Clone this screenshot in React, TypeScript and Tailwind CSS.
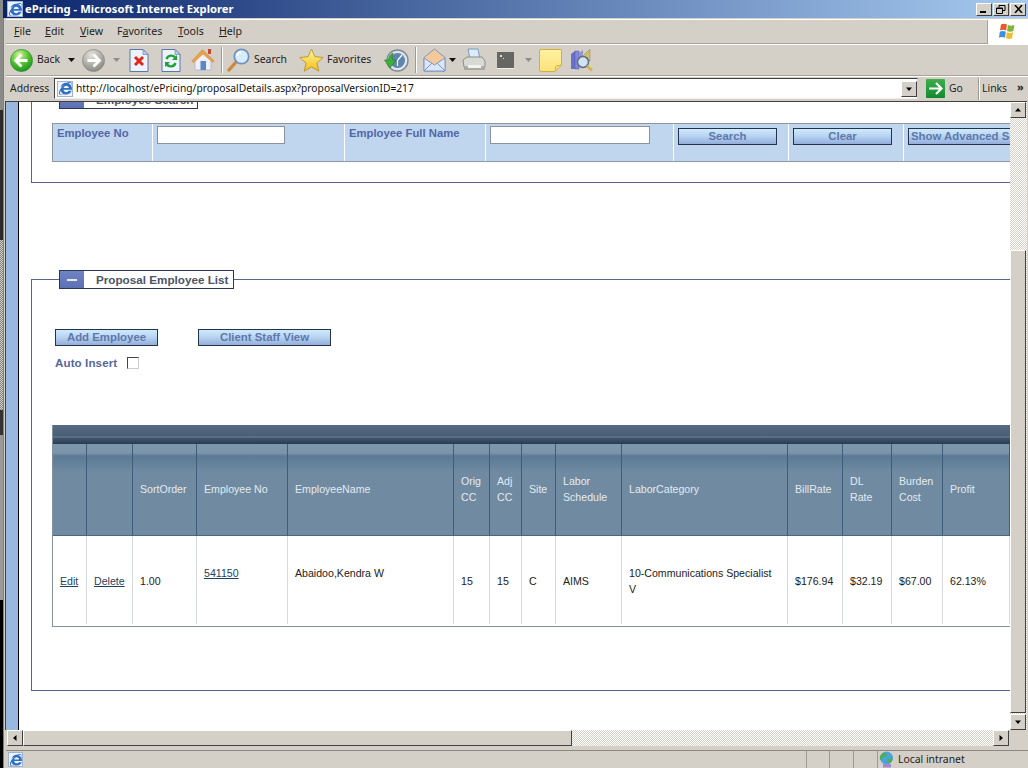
import React from "react";
import { FaInternetExplorer } from "react-icons/fa";

const ui = "font-['Noto_Sans',sans-serif]";
const web = "font-['Liberation_Sans',Arial,sans-serif]";

function Caret({ gray = false }: { gray?: boolean }) {
  return (
    <svg width="7" height="4" viewBox="0 0 7 4">
      <path d="M0 0h7L3.5 4z" fill={gray ? "#8d8d88" : "#111"} />
    </svg>
  );
}

function RoundArrow({ id, on, dir = -1 }: { id: string; on: boolean; dir?: number }) {
  const a = on ? "#d5f59a" : "#e4e4de";
  const b = on ? "#4fbe2c" : "#b0b0a8";
  const c = on ? "#1d8f22" : "#85857e";
  return (
    <svg width="23" height="23" viewBox="0 0 23 23">
      <defs>
        <radialGradient id={id} cx="40%" cy="25%" r="80%">
          <stop offset="0" stopColor={a} />
          <stop offset="0.55" stopColor={b} />
          <stop offset="1" stopColor={c} />
        </radialGradient>
      </defs>
      <circle cx="11.5" cy="11.5" r="11" fill={`url(#${id})`} stroke={c} strokeWidth="0.7" />
      <g transform={dir < 0 ? "" : "translate(23 0) scale(-1 1)"}>
        <path d="M11.5 5.5 5.5 11.5l6 6M6 11.5h11.5" fill="none" stroke="#fff" strokeWidth="2.8" />
      </g>
    </svg>
  );
}

function Page({ children }: { children: React.ReactNode }) {
  return (
    <svg width="20" height="23" viewBox="0 0 20 23">
      <path d="M1 .5h13l5 5v17H1z" fill="#eef3fb" stroke="#5a77ae" />
      <path d="M14 .5v5h5z" fill="#bdd0ea" stroke="#5a77ae" strokeWidth="0.6" />
      {children}
    </svg>
  );
}

const Home = () => (
  <svg width="24" height="24" viewBox="0 0 24 24">
    <path d="M4 11v11h16V11L12 4z" fill="#eef0f6" stroke="#9aa6bd" strokeWidth="0.6" />
    <path d="M0.8 13 11.5 1.8 23.2 13l-1.6 1.2L12 6 2.6 14.6z" fill="#eda24a" stroke="#c9792c" strokeWidth="0.5" />
    <rect x="17" y="1" width="3" height="5" fill="#c8452e" />
    <rect x="9.5" y="13" width="5.5" height="9" fill="#5c86c6" />
  </svg>
);

const Magnifier = () => (
  <svg width="24" height="24" viewBox="0 0 24 24">
    <path d="M9.5 13.5 2 22" stroke="#c98a3a" strokeWidth="3.4" strokeLinecap="round" />
    <circle cx="14.5" cy="8.5" r="7.2" fill="#d9ecfb" stroke="#6f93bf" strokeWidth="1.8" />
    <path d="M10 8a4.6 4.6 0 0 1 4-4" stroke="#fff" strokeWidth="1.6" fill="none" />
  </svg>
);

const Star = () => (
  <svg width="25" height="25" viewBox="0 0 25 25">
    <defs>
      <linearGradient id="st" x1="0" y1="0" x2="0" y2="1">
        <stop offset="0" stopColor="#fff69a" />
        <stop offset="1" stopColor="#f1bf1b" />
      </linearGradient>
    </defs>
    <path d="M12.5 1l3.4 7.7 8.3.8-6.3 5.5 1.9 8.2-7.3-4.3-7.3 4.3 1.9-8.2L.8 9.5l8.3-.8z" fill="url(#st)" stroke="#b58a1d" strokeWidth="0.8" />
  </svg>
);

const History = () => (
  <svg width="25" height="25" viewBox="0 0 25 25">
    <circle cx="13.5" cy="12.5" r="10.5" fill="#dfe4ea" stroke="#7f8a94" strokeWidth="1.4" />
    <circle cx="13.5" cy="12.5" r="7.5" fill="#5f84ad" />
    <path d="M13.5 12.5 18 7M13.5 12.5V18" stroke="#fff" strokeWidth="1.2" />
    <path d="M.5 12h4c0-3 1.500-5.500 4.500-7-1 2.500-1 5-.500 7h3.500L6 20z" fill="#3fb03a" stroke="#1f7a22" strokeWidth="0.6" />
  </svg>
);

const Mail = () => (
  <svg width="23" height="24" viewBox="0 0 23 24">
    <path d="M1 9.500 11.500 1 22 9.500V23H1z" fill="#f3c99a" stroke="#7e96c6" />
    <path d="M1 10v13h21V10l-10.500 7z" fill="#dbe6f7" stroke="#7e96c6" />
    <path d="M1 23l8-8M22 23l-8-8" stroke="#7e96c6" />
  </svg>
);

const Printer = () => (
  <svg width="24" height="24" viewBox="0 0 24 24">
    <path d="M6 1h10l2 10H8z" fill="#dcebfa" stroke="#7d9cc0" />
    <path d="M1 12l4-3h15l3 4v6H2z" fill="#d8d8d4" stroke="#8c8c88" />
    <path d="M2 19h21v3H2z" fill="#a9a9a4" />
    <path d="M6 17h13v3H6z" fill="#f2f2f0" />
  </svg>
);

const DarkSquare = () => (
  <div className="w-[17px] h-[17px] bg-[#666663] border-b border-[#eeeeea] relative">
    <span className="absolute left-[3px] top-[3px] w-[2px] h-[2px] bg-[#ddd]" />
    <span className="absolute left-[6px] top-[6px] w-[1px] h-[1px] bg-[#ddd]" />
  </div>
);

const Note = () => (
  <svg width="23" height="23" viewBox="0 0 23 23">
    <defs>
      <linearGradient id="nt" x1="0" y1="0" x2="0" y2="1">
        <stop offset="0" stopColor="#fff2a2" />
        <stop offset="1" stopColor="#fbe27a" />
      </linearGradient>
    </defs>
    <path d="M2 .5h20.500V16l-6.500 6.500H2A1.500 1.500 0 0 1 .5 21V2A1.500 1.500 0 0 1 2 .5z" fill="url(#nt)" stroke="#d9ae40" />
    <path d="M16 22.500 17 17l5.500-1" fill="none" stroke="#d9ae40" />
  </svg>
);

const Research = () => (
  <svg width="23" height="23" viewBox="0 0 23 23">
    <path d="M1 5l4-3v18H1z" fill="#6a6fce" />
    <path d="M5 2h4v18H5z" fill="#8488da" stroke="#5055a8" strokeWidth="0.5" />
    <path d="M9 4l4-3v8H9z" fill="#8f98c0" />
    <path d="M13 7 20 0v12h-7z" fill="#cdbd6a" stroke="#8d8450" strokeWidth="0.5" />
    <circle cx="13" cy="13" r="5.500" fill="#cfe3f5" stroke="#5e6c80" strokeWidth="1.500" />
    <path d="M17 17l5 4.500" stroke="#d8b53a" strokeWidth="2.500" />
  </svg>
);

const Sep = () => <div className="w-[2px] h-[26px] border-l border-l-[#9d9a90] border-r border-r-white" />;

const Flag = () => (
  <svg width="20" height="20" viewBox="0 0 20 20">
    <path d="M3 2.500c2-1 4-1 6 0L8 8.500c-2-1-4-1-6 0z" fill="#e8582a" />
    <path d="M10 3c2 1 4 1 6.500 0l-1.200 6c-2 1-4.300 1-6.300 0z" fill="#7cb43c" />
    <path d="M1.800 9.700c2-1 4-1 6 0L7 15.700c-2-1-4-1-6 0z" fill="#3f8fdc" />
    <path d="M8.800 10.200c2 1 4.300 1 6.300 0L14 16.300c-2 1-4 1-6 0z" fill="#f2bd2c" />
  </svg>
);

const Globe = () => (
  <svg width="17" height="17" viewBox="0 0 17 17">
    <circle cx="8.500" cy="7" r="6.500" fill="#4aa3dc" />
    <path d="M2.500 4.500c2-3 5-3 6-2s-1 3-3 3.500-1 3-2.500 3-1.500-3-.500-4.500zM10 8c2-1 4-1 4.500-.5S13 12 11 12s-2-3-1-4z" fill="#4fb04a" />
    <rect x="5" y="13" width="8" height="3.500" fill="#a58ac8" />
    <rect x="1" y="14" width="4" height="2.500" fill="#d8d4e6" />
  </svg>
);

const IE = ({ size = 16 }: { size?: number }) => (
  <span className="inline-flex items-center justify-center bg-[#eef3fb] border border-[#9db4d6]" style={{ width: size, height: size }}>
    <FaInternetExplorer size={size - 3} color="#2f6fc4" />
  </span>
);

function WinBtn({ children }: { children: React.ReactNode }) {
  return (
    <div className="w-[16px] h-[13px] bg-[#d4d0c8] border border-t-white border-l-white border-r-[#404040] border-b-[#404040] flex items-center justify-center">
      {children}
    </div>
  );
}

function Menu({ pre, u, post, w }: { pre?: string; u: string; post: string; w: string }) {
  return (
    <span className={`${w} text-[10.6px] text-[#222]`}>
      {pre}
      <span className="underline">{u}</span>
      {post}
    </span>
  );
}

function ArrowBtn({ d }: { d: string }) {
  return (
    <div className="w-[16px] h-[16px] shrink-0 bg-[#d4d0c8] border border-t-white border-l-white border-r-[#404040] border-b-[#404040] flex items-center justify-center">
      <svg width="8" height="8" viewBox="0 0 8 8">
        <path d={d} fill="#000" />
      </svg>
    </div>
  );
}

const hatch = "bg-[repeating-conic-gradient(#d4d0c8_0_25%,#ffffff_0_50%)] bg-[length:2px_2px]";
const blueBtn =
  "h-[17px] pt-[1px] border border-[#26324c] bg-[linear-gradient(#cdeafc,#b9d5f1_45%,#94aedb)] text-[11.4px] font-bold text-[#5f77ac] leading-none";

function Fieldset({ title, className, children }: { title: string; className: string; children: React.ReactNode }) {
  return (
    <div className={`relative ml-[12px] w-[1100px] border border-[#59628a] shrink-0 ${className}`}>
      <div className="absolute left-[27px] top-[-10px] h-[19px] flex items-center border border-[#2c3556] bg-white pr-[4px]">
        <div className="w-[24px] h-full bg-[linear-gradient(#6f84c4,#5c70b4)] flex items-center justify-center">
          <div className="w-[10px] h-[2px] bg-[#e4e8f4]" />
        </div>
        <span className="ml-[12px] text-[11.7px] font-bold text-[#4d5464]">{title}</span>
      </div>
      {children}
    </div>
  );
}

const columns: { w: string; head: React.ReactNode; cell: React.ReactNode }[] = [
  { w: "w-[34px]", head: "", cell: <a className="underline text-[#1d4260]">Edit</a> },
  { w: "w-[46px]", head: "", cell: <a className="underline text-[#1d4260]">Delete</a> },
  { w: "w-[64px]", head: "SortOrder", cell: "1.00" },
  { w: "w-[91px]", head: "Employee No", cell: <div className="pb-[16px]"><a className="underline text-[#1d4260]">541150</a></div> },
  { w: "w-[166px]", head: "EmployeeName", cell: <div className="pb-[16px]">Abaidoo,Kendra W</div> },
  { w: "w-[36px]", head: "Orig CC", cell: "15" },
  { w: "w-[32px]", head: "Adj CC", cell: "15" },
  { w: "w-[34px]", head: "Site", cell: "C" },
  { w: "w-[66px]", head: "Labor Schedule", cell: "AIMS" },
  { w: "w-[166px]", head: "LaborCategory", cell: <>10-Communications Specialist<br />V</> },
  { w: "w-[55px]", head: "BillRate", cell: "$176.94" },
  { w: "w-[49px]", head: "DL Rate", cell: "$32.19" },
  { w: "w-[51px]", head: "Burden Cost", cell: "$67.00" },
  { w: "w-[67px]", head: "Profit", cell: "62.13%" },
  { w: "w-[40px]", head: "", cell: "" },
];

export default function App() {
  return (
    <div className={`w-[1028px] h-[768px] flex overflow-hidden bg-[#d4d0c8] ${ui}`}>
      {/* sliver of desktop */}
      <div className="w-[3px] flex flex-col shrink-0">
        <div className="h-[110px] bg-[#8a8a86]" />
        <div className="h-[130px] bg-[#2a2a2a]" />
        <div className="h-[170px] bg-[repeating-conic-gradient(#808080_0_25%,#d4d0c8_0_50%)] bg-[length:2px_2px]" />
        <div className="h-[25px] bg-[#333]" />
        <div className="h-[165px] bg-[#9a9a96]" />
        <div className="flex-1 bg-black" />
      </div>

      <div className="flex-1 min-w-0 flex flex-col">
        {/* title bar */}
        <div className="h-[18px] shrink-0 flex items-center bg-[linear-gradient(90deg,#0a246a,#a6caf0)] pl-[4px] pr-[2px]">
          <IE size={16} />
          <span className="ml-[2px] text-[11.25px] font-bold text-white leading-none">ePricing - Microsoft Internet Explorer</span>
          <div className="ml-auto flex gap-[1px]">
            <WinBtn><div className="w-[6px] h-[2px] bg-black mt-[6px] mr-[2px]" /></WinBtn>
            <WinBtn>
              <svg width="10" height="9" viewBox="0 0 10 9"><path d="M3 .5h6v5H7M3 .5v2M.5 3h6v5.500H.5zM.5 3.500h6" fill="none" stroke="#000" /></svg>
            </WinBtn>
            <WinBtn>
              <svg width="9" height="8" viewBox="0 0 9 8"><path d="M1 0l7 8M8 0 1 8" stroke="#000" strokeWidth="1.500" /></svg>
            </WinBtn>
          </div>
        </div>

        <div className="flex-1 min-h-0 flex flex-col pl-[2px] border-l border-[#808080]">
          {/* menu */}
          <div className="h-[25px] shrink-0 mt-[1px] flex items-center border-t border-white border-b border-b-[#a5a296] pl-[8px]">
            <Menu u="F" post="ile" w="w-[31px]" />
            <Menu u="E" post="dit" w="w-[35px]" />
            <Menu u="V" post="iew" w="w-[37px]" />
            <Menu pre="F" u="a" post="vorites" w="w-[61px]" />
            <Menu u="T" post="ools" w="w-[41px]" />
            <Menu u="H" post="elp" w="w-[40px]" />
            <div className="ml-auto w-[41px] h-[24px] bg-white border-l border-[#a5a296] flex items-center justify-center">
              <Flag />
            </div>
          </div>

          {/* toolbar */}
          <div className="h-[32px] shrink-0 flex items-center border-t border-white border-b border-b-[#a5a296] pl-[4px] text-[10.4px] text-[#222]">
            <RoundArrow id="bk" on />
            <span className="ml-[4px] w-[22px]">Back</span>
            <span className="ml-[9px]"><Caret /></span>
            <span className="ml-[7px]"><RoundArrow id="fw" on={false} dir={1} /></span>
            <span className="ml-[8px]"><Caret gray /></span>
            <span className="ml-[9px]">
              <Page><path d="M6 8l8 8M14 8l-8 8" stroke="#e0261c" strokeWidth="3" /></Page>
            </span>
            <span className="ml-[12px]">
              <Page>
                <path d="M5.500 10a5 5 0 0 1 9-1" fill="none" stroke="#21a038" strokeWidth="2.400" />
                <path d="M14.500 14a5 5 0 0 1-9 1" fill="none" stroke="#21a038" strokeWidth="2.400" />
                <path d="M16 6v5h-5zM4 18v-5h5z" fill="#21a038" />
              </Page>
            </span>
            <span className="ml-[10px]"><Home /></span>
            <span className="ml-[6px]"><Sep /></span>
            <span className="ml-[4px]"><Magnifier /></span>
            <span className="ml-[3px] w-[33px]">Search</span>
            <span className="ml-[12px]"><Star /></span>
            <span className="ml-[3px] w-[44px]">Favorites</span>
            <span className="ml-[13px]"><History /></span>
            <span className="ml-[6px]"><Sep /></span>
            <span className="ml-[6px]"><Mail /></span>
            <span className="ml-[3px]"><Caret /></span>
            <span className="ml-[6px]"><Printer /></span>
            <span className="ml-[11px]"><DarkSquare /></span>
            <span className="ml-[11px]"><Caret gray /></span>
            <span className="ml-[7px]"><Note /></span>
            <span className="ml-[8px]"><Research /></span>
          </div>

          {/* address */}
          <div className="h-[24px] shrink-0 flex items-center border-t border-white pl-[4px] text-[10.4px] text-[#222]">
            <span className="w-[44px]">Address</span>
            <div className="w-[864px] h-[21px] flex items-center bg-white border border-t-[#404040] border-l-[#404040] border-r-[#d4d0c8] border-b-[#f0f0f0] pl-[2px]">
              <IE size={16} />
              <span className="ml-[3px] text-[10.25px] text-[#111] whitespace-nowrap">http://localhost/ePricing/proposalDetails.aspx?proposalVersionID=217</span>
              <div className="ml-auto"><ArrowBtn d="M1 2.500h6L4 6z" /></div>
            </div>
            <div className="ml-[8px] w-[19px] h-[19px] bg-[linear-gradient(#3fae4e,#128a2c)] flex items-center justify-center rounded-[1px]">
              <svg width="15" height="13" viewBox="0 0 15 13"><path d="M8 1l5.500 5.500L8 12M1 6.500h12" fill="none" stroke="#fff" strokeWidth="2.200" /></svg>
            </div>
            <span className="ml-[4px] w-[29px]">Go</span>
            <div className="h-[22px] border-l border-l-[#9d9a90] border-r border-r-white w-[2px]" />
            <span className="ml-[2px] w-[35px]">Links</span>
            <span className="text-[11px] font-bold leading-none -mt-[4px]">»</span>
          </div>

          {/* content */}
          <div className="flex-1 min-h-0 flex border-t border-t-[#404040] mt-[1px] border-l border-l-[#404040] -ml-[1px] mr-[1px]">
            <div className="w-[12px] shrink-0 bg-[#99b8de]" />
            <div className="w-[1px] shrink-0 bg-black" />
            <main className={`flex-1 min-w-0 overflow-hidden bg-white flex flex-col ${web}`}>
              <Fieldset title="Employee Search" className="-mt-[3px] h-[84px] pt-[23px] pl-[20px]">
                <div className="flex h-[39px] w-[1040px] bg-[#c0d5ee] border-y border-l border-[#8f969e] text-[11.3px] font-bold text-[#5068a8]">
                  <div className="w-[100px] border-r border-white pl-[4px] pt-[1px]">Employee No</div>
                  <div className="w-[192px] border-r border-white pl-[4px] pt-[2px]">
                    <div className="w-[128px] h-[18px] bg-white border border-[#8a939e]" />
                  </div>
                  <div className="w-[141px] border-r border-white pl-[4px] pt-[1px]">Employee Full Name</div>
                  <div className="w-[188px] border-r border-white pl-[4px] pt-[2px]">
                    <div className="w-[160px] h-[18px] bg-white border border-[#8a939e]" />
                  </div>
                  <div className="w-[115px] border-r border-white pl-[4px] pt-[4px]">
                    <button className={`${blueBtn} w-[99px]`}>Search</button>
                  </div>
                  <div className="w-[115px] border-r border-white pl-[4px] pt-[4px]">
                    <button className={`${blueBtn} w-[99px]`}>Clear</button>
                  </div>
                  <div className="pl-[4px] pt-[4px]">
                    <button className={`${blueBtn} w-[160px] text-left pl-[2px] whitespace-nowrap`}>Show Advanced Search</button>
                  </div>
                </div>
              </Fieldset>

              <Fieldset title="Proposal Employee List" className="mt-[96px] h-[412px] pt-[49px]">
                <div className="flex gap-[40px] pl-[23px]">
                  <button className={`${blueBtn} w-[103px]`}>Add Employee</button>
                  <button className={`${blueBtn} w-[133px]`}>Client Staff View</button>
                </div>
                <div className="flex items-center pl-[23px] mt-[11px] h-[12px]">
                  <span className="w-[72px] text-[11.6px] font-bold text-[#56689a] tracking-[0.1px]">Auto Insert</span>
                  <div className="w-[12px] h-[12px] bg-white border border-t-[#444] border-l-[#444] border-r-[#ccc] border-b-[#ccc]" />
                </div>

                <div className="ml-[20px] mt-[56px] w-[1010px] border-l border-b border-[#8391a0]">
                  <div className="h-[19px] bg-[linear-gradient(#566b81_0,#4a5f76_11px,#6c8095_12px,#41566e_13px,#2a3c54_100%)]" />
                  <table className="table-fixed border-separate border-spacing-0 w-[991px] text-[10.6px] leading-[16px]">
                    <thead>
                      <tr className="h-[92px] bg-[linear-gradient(#7e97ad_0,#7a94aa_9px,#5c7a95_12px,#6f8aa1_28px,#6f8aa1_100%)]">
                        {columns.map((c, i) => (
                          <th key={i} className={`${c.w} border-r border-[#3f5d7a] border-b border-b-[#4a6680] pl-[7px] pr-[4px] pb-[2px] text-left align-middle font-normal text-[#e4eaf0]`}>
                            {c.head}
                          </th>
                        ))}
                      </tr>
                    </thead>
                    <tbody>
                      <tr className="h-[88px]">
                        {columns.map((c, i) => (
                          <td key={i} className="border-r border-[#d5d9dd] pl-[7px] pr-[4px] pt-[2px] align-middle text-[#222]">
                            {c.cell}
                          </td>
                        ))}
                      </tr>
                    </tbody>
                  </table>
                  <div className="h-[2px]" />
                </div>
              </Fieldset>
            </main>

            {/* vertical scrollbar */}
            <div className={`w-[17px] shrink-0 flex flex-col ${hatch}`}>
              <ArrowBtn d="M1 5.500h6L4 2z" />
              <div className="h-[132px]" />
              <div className="h-[463px] w-[16px] bg-[#d4d0c8] border border-t-white border-l-white border-r-[#404040] border-b-[#404040]" />
              <div className="flex-1" />
              <ArrowBtn d="M1 2.500h6L4 6z" />
            </div>
          </div>

          {/* horizontal scrollbar */}
          <div className="h-[16px] shrink-0 flex ml-[1px]">
            <ArrowBtn d="M5.500 1v6L2 4z" />
            <div className="w-[549px] bg-[#d4d0c8] border border-t-white border-l-white border-r-[#404040] border-b-[#404040]" />
            <div className={`w-[421px] ${hatch}`} />
            <ArrowBtn d="M2.500 1v6L6 4z" />
          </div>

          {/* status bar */}
          <div className="h-[22px] shrink-0 flex items-end">
            <div className="flex-1 h-[18px] flex items-center border-t border-[#8a8880] pl-[2px]">
              <IE size={15} />
              <div className="ml-auto flex h-full text-[10.4px] text-[#222]">
                <div className="w-[23px] border-l border-[#9d9a90]" />
                <div className="w-[24px] border-l border-[#9d9a90]" />
                <div className="w-[24px] border-l border-[#9d9a90]" />
                <div className="w-[151px] border-l border-[#9d9a90] flex items-center">
                  <Globe />
                  <span className="ml-[3px]">Local intranet</span>
                </div>
              </div>
            </div>
          </div>
        </div>
      </div>
    </div>
  );
}
